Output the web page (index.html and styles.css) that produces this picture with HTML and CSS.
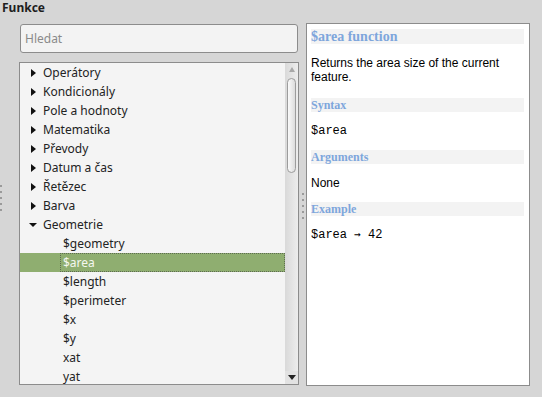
FILE: index.html
```html
<!DOCTYPE html>
<html lang="cs">
<head>
    <meta charset="UTF-8">
    <title>Funkce</title>
    <link rel="stylesheet" href="styles.css">
</head>
<body>
    <div class="dialog">
        <div class="title">Funkce</div>
        <div class="main">
            <div class="grip grip-left"><span class="dots"></span></div>

            <div class="left">
                <input class="search" type="text" placeholder="Hledat">
                <div class="tree">
                    <div class="rows">
                        <div class="row"><span class="twisty closed"></span>Operátory</div>
                        <div class="row"><span class="twisty closed"></span>Kondicionály</div>
                        <div class="row"><span class="twisty closed"></span>Pole a hodnoty</div>
                        <div class="row"><span class="twisty closed"></span>Matematika</div>
                        <div class="row"><span class="twisty closed"></span>Převody</div>
                        <div class="row"><span class="twisty closed"></span>Datum a čas</div>
                        <div class="row"><span class="twisty closed"></span>Řetězec</div>
                        <div class="row"><span class="twisty closed"></span>Barva</div>
                        <div class="row"><span class="twisty open"></span>Geometrie</div>
                        <div class="row child"><span class="label">$geometry</span></div>
                        <div class="row child selected"><span class="label">$area</span></div>
                        <div class="row child"><span class="label">$length</span></div>
                        <div class="row child"><span class="label">$perimeter</span></div>
                        <div class="row child"><span class="label">$x</span></div>
                        <div class="row child"><span class="label">$y</span></div>
                        <div class="row child"><span class="label">xat</span></div>
                        <div class="row child"><span class="label">yat</span></div>
                    </div>
                    <div class="scrollbar">
                        <div class="sb-btn"><span class="arrow-up"></span></div>
                        <div class="thumb"></div>
                        <div class="sb-space"></div>
                        <div class="sb-btn sb-down"><span class="arrow-down"></span></div>
                    </div>
                </div>
            </div>

            <div class="grip grip-mid"><span class="dots"></span></div>

            <div class="help">
                <h2>$area function</h2>
                <p>Returns the area size of the current feature.</p>
                <h3>Syntax</h3>
                <pre>$area</pre>
                <h3>Arguments</h3>
                <p>None</p>
                <h3>Example</h3>
                <pre>$area <span class="arrow">→</span> 42</pre>
            </div>
        </div>
    </div>
</body>
</html>
```

FILE: styles.css
```css
/* Function browser dialog */
* {
    box-sizing: border-box;
}

body {
    margin: 0;
    background: #d6d6d6;
    font-family: "Noto Sans", sans-serif;
    font-size: 12px;
    color: #232323;
}

.dialog {
    width: 542px;
    height: 397px;
    overflow: hidden;
}

.title {
    height: 23px;
    line-height: 16px;
    padding-left: 2px;
    font-weight: bold;
    color: #1e1e1e;
}

.main {
    display: flex;
    height: 363px;
}

/* splitter handles */
.grip {
    flex: none;
}

.grip-left {
    width: 19px;
    padding-top: 162px;
}

.grip-mid {
    width: 7px;
    padding-top: 170px;
    padding-left: 3px;
}

.dots {
    display: block;
    width: 2px;
    height: 26px;
    background: repeating-linear-gradient(#9a9a9a 0 2px, transparent 2px 6px);
}

.left {
    width: 280px;
    display: flex;
    flex-direction: column;
    gap: 9px;
}

.search {
    margin: 1px 1px 0;
    height: 29px;
    border: 1px solid #8c8c8c;
    border-radius: 3px;
    background: #f3f3f3;
    padding: 0 4px;
    font-family: "Noto Sans", sans-serif;
    font-size: 12px;
    color: #232323;
}

.search::placeholder {
    color: #8a8a8a;
}

.tree {
    height: 323px;
    border: 1px solid #8c8c8c;
    background: #f4f4f4;
    display: flex;
    overflow: hidden;
}

.rows {
    flex: 1;
    overflow: hidden;
}

.row {
    display: flex;
    align-items: center;
    height: 19px;
    line-height: 19px;
    white-space: nowrap;
}

.twisty {
    width: 12px;
    height: 19px;
    margin-left: 7px;
    margin-right: 4px;
    display: flex;
    align-items: center;
    justify-content: center;
}

.twisty.closed::before {
    content: "";
    border-left: 5px solid #111;
    border-top: 4.5px solid transparent;
    border-bottom: 4.5px solid transparent;
}

.twisty.open::before {
    content: "";
    border-top: 4px solid #111;
    border-left: 4px solid transparent;
    border-right: 4px solid transparent;
}

.child .label {
    flex: 1;
    margin-left: 40px;
    padding-left: 3px;
    height: 19px;
}

.selected {
    background: #8fae70;
    color: #f4f7ef;
}

.selected .label {
    border: 1px dotted #5d6b50;
    line-height: 17px;
    padding-left: 2px;
}

/* scroll bar */
.scrollbar {
    width: 13px;
    display: flex;
    flex-direction: column;
    background: linear-gradient(to right, #d9d9d9, #ededed);
}

.sb-btn {
    height: 13px;
    display: flex;
    align-items: center;
    justify-content: center;
}

.sb-down {
    background: #e2e2e2;
}

.arrow-up {
    border-bottom: 5px solid #a8a8a8;
    border-left: 3.5px solid transparent;
    border-right: 3.5px solid transparent;
}

.arrow-down {
    border-top: 5px solid #222;
    border-left: 4px solid transparent;
    border-right: 4px solid transparent;
}

.thumb {
    height: 95px;
    margin: 2px 2px 0 2px;
    border: 1px solid #9c9c9c;
    border-radius: 5px;
    background: linear-gradient(to right, #fafafa, #dcdcdc);
}

.sb-space {
    flex: 1;
}

/* help panel */
.help {
    width: 224px;
    border: 1px solid #8c8c8c;
    background: #fff;
    padding: 5px 5px 0 4px;
    font-family: "Liberation Sans", Arial, sans-serif;
    color: #000;
    overflow: hidden;
}

.help h2,
.help h3 {
    margin: 0;
    background: #f3f3f3;
    font-family: "Liberation Serif", "Times New Roman", serif;
    font-weight: bold;
    color: #7ea6dc;
}

.help h2 {
    font-size: 14px;
    height: 15px;
    line-height: 15px;
}

.help h3 {
    font-size: 12px;
    height: 14px;
    line-height: 14px;
    margin-top: 12px;
}

.help p {
    margin: 12px 0;
    line-height: 14px;
}

.help p:first-of-type {
    margin-bottom: 14px;
}

.help pre {
    margin: 12px 0;
    font-family: "Liberation Mono", "Courier New", monospace;
    font-size: 12px;
    line-height: 14px;
}

.help .arrow {
    font-family: "DejaVu Sans Mono", monospace;
    font-size: 11px;
}
```
